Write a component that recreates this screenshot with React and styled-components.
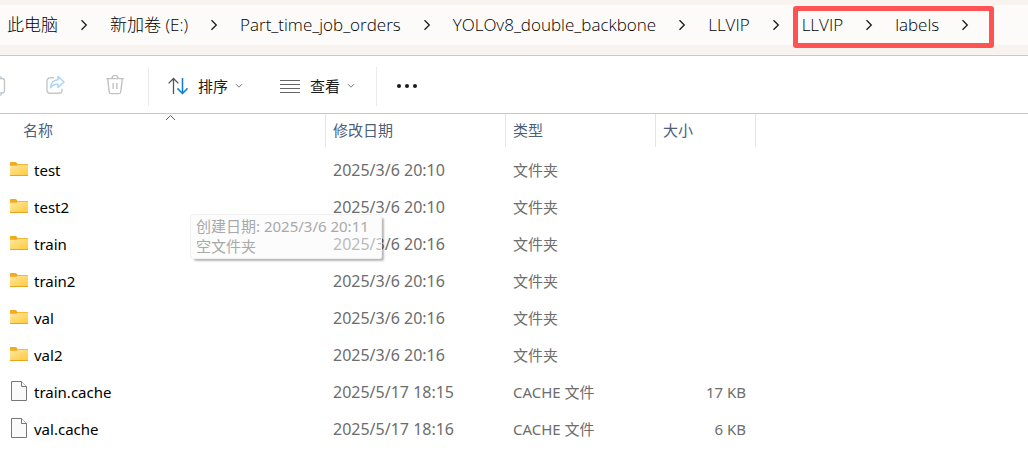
import styled, { createGlobalStyle } from "styled-components";

const GlobalStyle = createGlobalStyle`
	* {
		box-sizing: border-box;
	}
	body {
		margin: 0;
		background: #fff;
		font-family: "Noto Sans", "Noto Sans CJK SC", sans-serif;
		overflow-x: hidden;
	}
	button {
		border: 0;
		padding: 0;
		background: none;
		font: inherit;
		color: inherit;
	}
`;

const AddressBar = styled.header`
	padding: 5px 0 10px;
	background: #f8f3ee;
	border-bottom: 1px solid #d5c5b8;
`;

const Crumbs = styled.nav`
	display: flex;
	align-items: center;
	height: 40px;
	padding-left: 7px;
	background: #fcfbf9;
	white-space: nowrap;
`;

const Crumb = styled.a`
	font-family: "Open Sans", "Noto Sans CJK SC", sans-serif;
	font-size: 17px;
	font-weight: 300;
	line-height: 40px;
	color: #000;
	text-decoration: none;
`;

const Separator = styled.span`
	display: flex;
	flex: none;
	justify-content: center;
	width: 52px;
`;

const Marked = styled.div`
	position: relative;
	display: flex;
	align-items: center;
	&::after {
		content: "";
		position: absolute;
		inset: 1px -3px -3px -9px;
		border: 5px solid #ff5353;
		border-radius: 3px;
		pointer-events: none;
	}
`;

const Toolbar = styled.div`
	display: flex;
	align-items: center;
	height: 58px;
	padding-top: 3px;
	border-bottom: 1px solid #d5c5b8;
	font-size: 15px;
	color: #1b1b1b;
	overflow: hidden;
`;

const IconGroup = styled.div`
	display: flex;
	gap: 40px;
	margin-left: -15px;
	padding-right: 23px;
`;

const MenuGroup = styled.div`
	display: flex;
	gap: 37px;
	padding: 0 21px 0 19px;
`;

const IconButton = styled.button`
	display: flex;
	svg {
		display: block;
	}
`;

const MenuButton = styled.button`
	display: flex;
	align-items: center;
	gap: 10px;
	line-height: 20px;
`;

const MenuLabel = styled.span`
	display: flex;
	align-items: center;
	gap: 7px;
`;

const Divider = styled.span`
	width: 1px;
	height: 39px;
	background: #ebebeb;
`;

const MoreButton = styled(IconButton)`
	margin-left: 20px;
`;

const Files = styled.main`
	position: relative;
`;

const Table = styled.table`
	width: 100%;
	table-layout: fixed;
	border-collapse: separate;
	border-spacing: 0;
	font-size: 15px;
`;

const Col = styled.col`
	width: ${({ $width }) => $width}px;
`;

const Th = styled.th`
	position: relative;
	height: 37px;
	padding: 0 0 5px ${({ $first }) => ($first ? 23 : 7)}px;
	font-weight: 400;
	line-height: 32px;
	text-align: left;
	color: #4c607a;
	background: linear-gradient(#e5e5e5, #e5e5e5) right top / 1px 33px no-repeat;
	&:last-child {
		background: none;
	}
`;

const SortMark = styled.svg`
	position: absolute;
	top: 0;
	left: 165px;
`;

const Td = styled.td`
	height: 37px;
	padding: 0 10px 0 7px;
	font-size: ${({ $date }) => ($date ? 16 : 15)}px;
	line-height: 20px;
	text-align: ${({ $right }) => ($right ? "right" : "left")};
	color: #6d6d6d;
	white-space: nowrap;
`;

const FileName = styled.div`
	display: flex;
	align-items: center;
	gap: 6px;
	padding-left: 3px;
	color: #000;
`;

const Tooltip = styled.div`
	position: absolute;
	top: 100px;
	left: 190px;
	padding: 1px 12px 2px 5px;
	border: 1px solid #f0f0f0;
	border-radius: 3px;
	background: rgba(250, 250, 250, 0.55);
	box-shadow: 3px 3px 2px -1px rgba(0, 0, 0, 0.28);
	font-size: 15px;
	line-height: 20px;
	color: #a9a9a9;
	white-space: nowrap;
`;

const ChevronRight = () => (
	<svg width='8' height='12' viewBox='0 0 8 12' fill='none' stroke='#1b1b1b' strokeWidth='1.3'>
		<path d='M1.5 1.2 6.3 6 1.5 10.8' />
	</svg>
);

const ChevronDown = () => (
	<svg width='8' height='6' viewBox='0 0 8 6' fill='none' stroke='#777' strokeWidth='1'>
		<path d='M1 1.2 4 4.2 7 1.2' />
	</svg>
);

const CopyIcon = () => (
	<svg width='21' height='22' viewBox='0 0 21 22' fill='none' strokeWidth='1.3'>
		<rect x='4.5' y='1.6' width='12' height='18.8' rx='2' stroke='#a9d3f5' />
		<rect x='9' y='3.5' width='10.5' height='14.5' rx='2.5' fill='#fff' stroke='#c4c4c4' />
	</svg>
);

const ShareIcon = () => (
	<svg width='19' height='20' viewBox='0 0 19 20' fill='none' strokeWidth='1.4' strokeLinejoin='round'>
		<path d='M8 2.8H4A3 3 0 0 0 1 5.8v9.4a3 3 0 0 0 3 3h9a3 3 0 0 0 3-3v-1.5' stroke='#c8c8c8' />
		<path d='M12 1.5 18 7l-6 5.4V9.3C8.5 9 6.3 10.2 4.4 12.8 4.8 8 7.4 5 12 4.7Z' stroke='#a9d3f5' />
	</svg>
);

const TrashIcon = () => (
	<svg width='20' height='20' viewBox='0 0 20 20' fill='none' stroke='#c2c2c2' strokeWidth='1.4'>
		<path d='M1 3.6h18M7 3.4a3 3 0 0 1 6 0M2.7 3.8l1.5 13a2 2 0 0 0 2 1.8h7.6a2 2 0 0 0 2-1.8l1.5-13M8.2 8v6M11.8 8v6' />
	</svg>
);

const SortIcon = () => (
	<svg width='20' height='18' viewBox='0 0 20 18' fill='none' strokeWidth='1.3'>
		<path d='M5.5 17V1.5M.6 6.4 5.5 1.5l4.9 4.9' stroke='#555' />
		<path d='M14.5 1v15.5M9.4 11.4l5.1 5.1 5.1-5.1' stroke='#0f7bd4' strokeWidth='1.5' />
	</svg>
);

const LinesIcon = () => (
	<svg width='20' height='14' viewBox='0 0 20 14' stroke='#666' strokeWidth='1'>
		<path d='M0 1.5h20M0 5.5h20M0 9.5h20M0 13.5h20' />
	</svg>
);

const DotsIcon = () => (
	<svg width='20' height='4' viewBox='0 0 20 4' fill='#1b1b1b'>
		<circle cx='2' cy='2' r='2' />
		<circle cx='10' cy='2' r='2' />
		<circle cx='18' cy='2' r='2' />
	</svg>
);

const FolderIcon = () => (
	<svg width='18' height='18' viewBox='0 0 18 18'>
		<defs>
			<linearGradient id='folder' x1='0' y1='0' x2='1' y2='1'>
				<stop offset='0' stopColor='#ffe8a0' />
				<stop offset='1' stopColor='#ffca3e' />
			</linearGradient>
		</defs>
		<path d='M0 1.5Q0 1 .8 1H6l1.6 2H17.5q.5 0 .5.5V8H0Z' fill='#f3ab1d' />
		<path d='M0 4.8h6.5L8 3.8h10V14H0Z' fill='url(#folder)' />
		<path d='M0 14h18v.5q0 .5-.5.5H.5Q0 15 0 14.5Z' fill='#e9a51f' />
	</svg>
);

const FileIcon = () => (
	<svg width='18' height='22' viewBox='0 0 18 22' fill='#fafafa' stroke='#777' strokeWidth='1'>
		<path d='M1.5.5h10l5 5v14h-15Z' />
		<path d='M11.5.5v5h5' />
	</svg>
);

const path = ["此电脑", "新加卷 (E:)", "Part_time_job_orders", "YOLOv8_double_backbone", "LLVIP"];
const markedPath = ["LLVIP", "labels"];

const files = [
	{ name: "test", date: "2025/3/6 20:10", type: "文件夹" },
	{ name: "test2", date: "2025/3/6 20:10", type: "文件夹" },
	{ name: "train", date: "2025/3/6 20:16", type: "文件夹" },
	{ name: "train2", date: "2025/3/6 20:16", type: "文件夹" },
	{ name: "val", date: "2025/3/6 20:16", type: "文件夹" },
	{ name: "val2", date: "2025/3/6 20:16", type: "文件夹" },
	{ name: "train.cache", date: "2025/5/17 18:15", type: "CACHE 文件", size: "17 KB" },
	{ name: "val.cache", date: "2025/5/17 18:16", type: "CACHE 文件", size: "6 KB" },
];

const renderCrumb = (label) => [
	<Crumb key={label} href='#'>
		{label}
	</Crumb>,
	<Separator key={`${label}-sep`}>
		<ChevronRight />
	</Separator>,
];

const App = () => {
	return (
		<>
			<GlobalStyle />
			<AddressBar>
				<Crumbs>
					{path.map(renderCrumb)}
					<Marked>{markedPath.map(renderCrumb)}</Marked>
				</Crumbs>
			</AddressBar>

			<Toolbar>
				<IconGroup>
					<IconButton aria-label='复制'>
						<CopyIcon />
					</IconButton>
					<IconButton aria-label='共享'>
						<ShareIcon />
					</IconButton>
					<IconButton aria-label='删除'>
						<TrashIcon />
					</IconButton>
				</IconGroup>
				<Divider />
				<MenuGroup>
					<MenuButton>
						<SortIcon />
						<MenuLabel>
							排序 <ChevronDown />
						</MenuLabel>
					</MenuButton>
					<MenuButton>
						<LinesIcon />
						<MenuLabel>
							查看 <ChevronDown />
						</MenuLabel>
					</MenuButton>
				</MenuGroup>
				<Divider />
				<MoreButton aria-label='更多'>
					<DotsIcon />
				</MoreButton>
			</Toolbar>

			<Files>
				<Table>
					<colgroup>
						<Col $width={326} />
						<Col $width={180} />
						<Col $width={150} />
						<Col $width={100} />
						<col />
					</colgroup>
					<thead>
						<tr>
							<Th $first>
								名称
								<SortMark width='11' height='7' viewBox='0 0 11 7' fill='none' stroke='#666'>
									<path d='M1 6 5.5 1.5 10 6' />
								</SortMark>
							</Th>
							<Th>修改日期</Th>
							<Th>类型</Th>
							<Th>大小</Th>
							<Th />
						</tr>
					</thead>
					<tbody>
						{files.map((file) => (
							<tr key={file.name}>
								<Td>
									<FileName>
										{file.size ? <FileIcon /> : <FolderIcon />}
										{file.name}
									</FileName>
								</Td>
								<Td $date>{file.date}</Td>
								<Td>{file.type}</Td>
								<Td $right>{file.size}</Td>
								<Td />
							</tr>
						))}
					</tbody>
				</Table>
				<Tooltip role='tooltip'>
					创建日期: 2025/3/6 20:11
					<br />
					空文件夹
				</Tooltip>
			</Files>
		</>
	);
};

export default App;
